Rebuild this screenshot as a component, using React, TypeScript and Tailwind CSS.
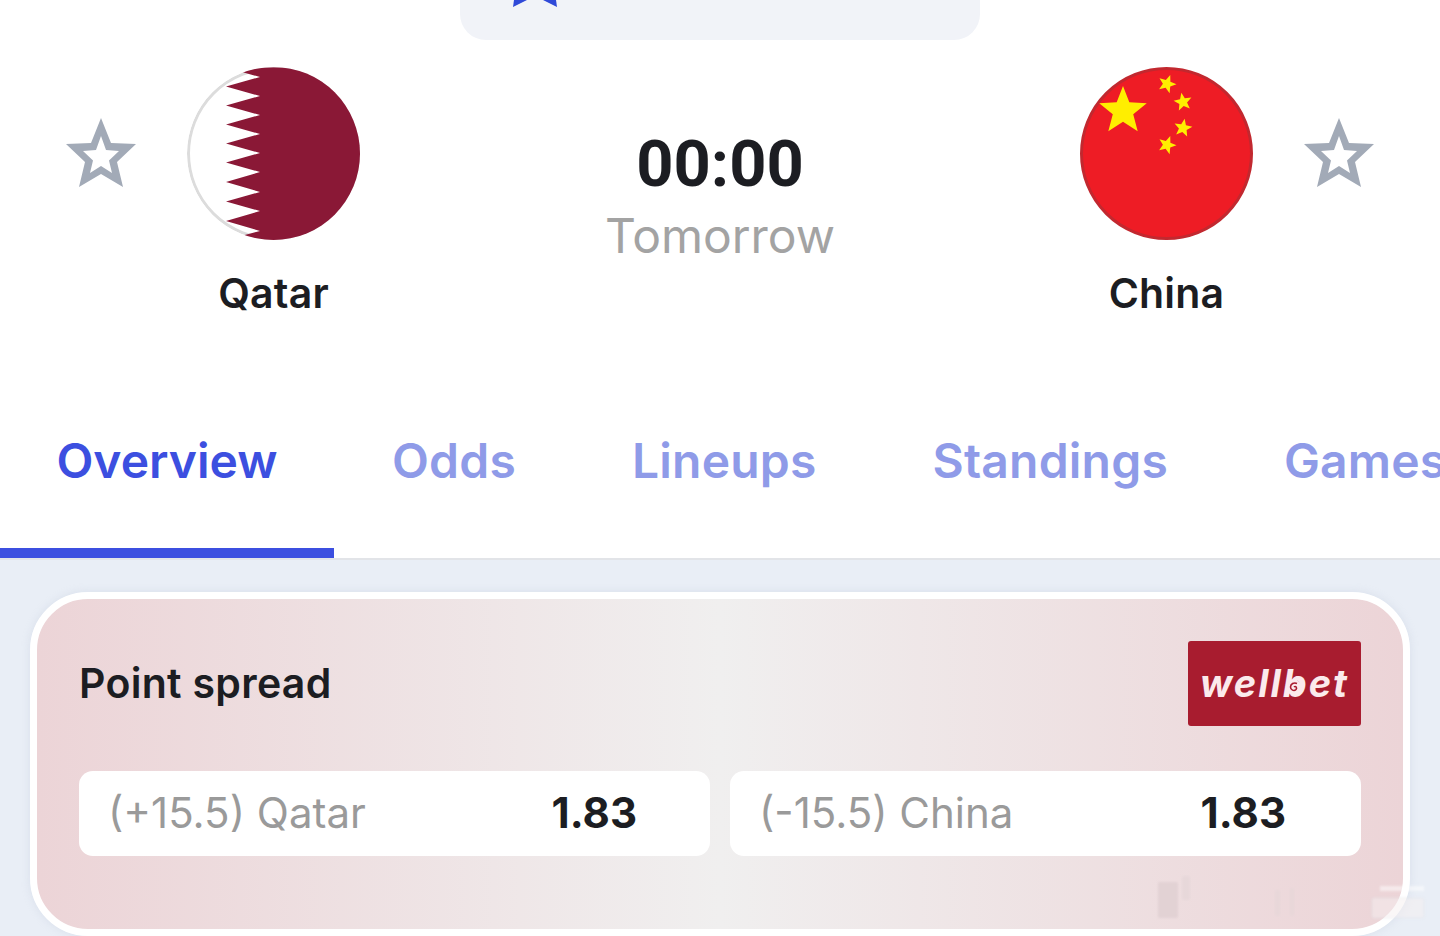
const SANS = "font-['Inter','Liberation_Sans',sans-serif]";

const QATAR_TEETH = [
  "39,0.5", "73,10", "39,19.5", "73,29", "39,38.5", "73,48", "39,57.5", "73,67", "39,76.5",
  "73,86", "39,95.5", "73,105", "39,115", "73,125", "39,134.5", "73,144", "39,154", "73,164", "39,173",
];

function StarOutline() {
  return (
    <svg width="70" height="70" viewBox="0 0 70 70" className="shrink-0">
      <path
        fillRule="evenodd"
        fill="#a2aab7"
        d="M35 0 L45 25 L70 26 L51 44 L57 69 L35 56 L13 69 L19 44 L0 26 L25 25 Z M35 18 L30 32 L17 33 L27 42.5 L24 55 L35 48 L46 55 L43 42.5 L53 33 L40 32 Z"
      />
    </svg>
  );
}

function QatarFlag() {
  return (
    <svg width="173" height="173" viewBox="0 0 173 173">
      <defs>
        <clipPath id="qatar-clip">
          <circle cx="86.5" cy="86.5" r="86.5" />
        </clipPath>
      </defs>
      <g clipPath="url(#qatar-clip)">
        <rect width="173" height="173" fill="#ffffff" />
        <circle cx="86.5" cy="86.5" r="85" fill="none" stroke="#dcdcdc" strokeWidth="3" />
        <polygon points={`${QATAR_TEETH.join(" ")} 173,173 173,0`} fill="#8a1836" />
      </g>
    </svg>
  );
}

function FlagStar({ x, y, r, rotate = 0 }: { x: number; y: number; r: number; rotate?: number }) {
  const pts = Array.from({ length: 10 }, (_, i) => {
    const radius = i % 2 === 0 ? r : r * 0.43;
    const a = (Math.PI / 5) * i - Math.PI / 2;
    return `${(radius * Math.cos(a)).toFixed(2)},${(radius * Math.sin(a)).toFixed(2)}`;
  }).join(" ");
  return <polygon points={pts} fill="#ffee00" transform={`translate(${x} ${y}) rotate(${rotate})`} />;
}

function ChinaFlag() {
  return (
    <svg width="173" height="173" viewBox="0 0 173 173">
      <circle cx="86.5" cy="86.5" r="85" fill="#ee1c25" stroke="#c2282f" strokeWidth="3" />
      <FlagStar x={43} y={44} r={25} />
      <FlagStar x={87} y={17} r={9.5} rotate={20} />
      <FlagStar x={103} y={35} r={9.5} rotate={-10} />
      <FlagStar x={103} y={61} r={9.5} rotate={10} />
      <FlagStar x={87} y={78} r={9.5} rotate={20} />
    </svg>
  );
}

function Team({ name, flag }: { name: string; flag: React.ReactNode }) {
  return (
    <div className="flex w-[173px] flex-col items-center">
      {flag}
      <div className="mt-[31px] text-[41px] leading-[44px] font-semibold tracking-[0.2px] text-[#1c1d22]">{name}</div>
    </div>
  );
}

const TABS = ["Overview", "Odds", "Lineups", "Standings", "Games"];

function Tabs() {
  return (
    <div className="mt-[95px] flex h-[150px] overflow-hidden border-b-2 border-[#e2e4e8] whitespace-nowrap">
      {TABS.map((tab, i) => (
        <div
          key={tab}
          className={
            i === 0
              ? "h-[148px] w-[334px] shrink-0 border-b-[10px] border-[#3c4fe0] pt-[23px] text-center text-[48px] leading-[56px] font-semibold text-[#3c4fe0]"
              : "h-[148px] shrink-0 px-[58px] pt-[23px] text-[48px] leading-[56px] font-semibold tracking-[0.2px] text-[#8f9be8]"
          }
        >
          {tab}
        </div>
      ))}
    </div>
  );
}

function OddButton({ label, odd, right }: { label: string; odd: string; right: string }) {
  return (
    <div className={`flex h-[85px] items-center justify-between rounded-[14px] bg-white pb-[2px] pl-[29px] ${right}`}>
      <span className="text-[42px] text-[#9a9a9a]">{label}</span>
      <span className="text-[42px] font-bold text-[#1c1d22]">{odd}</span>
    </div>
  );
}

function WellbetLogo() {
  return (
    <div className="relative flex h-[85px] w-[173px] items-center justify-center rounded-[3px] bg-[#a81c2f] text-[38px] font-bold tracking-[2px] text-[#fbeaec] italic">
      wellbet
      <svg width="16" height="16" viewBox="0 0 16 16" className="absolute top-[38px] left-[98px]">
        <circle cx="8" cy="8" r="7.5" fill="#fbeaec" />
        <path d="M8 8 C9.5 6.5 11.5 8.5 10 10.5 C8 12.5 4.5 11 4.5 8 C4.5 5 8 3 11 4.5" fill="none" stroke="#a81c2f" strokeWidth="1.6" />
      </svg>
    </div>
  );
}

function Watermark() {
  return (
    <svg width="290" height="60" viewBox="0 0 290 60" className="absolute top-[870px] left-[1140px] opacity-50 blur-[1px]">
      <rect x="18" y="12" width="20" height="36" fill="#d8c8ca" />
      <rect x="42" y="6" width="8" height="24" fill="#e2d4d6" />
      <rect x="135" y="20" width="5" height="26" fill="#e4d6d8" />
      <rect x="150" y="18" width="4" height="28" fill="#e4d6d8" />
      <rect x="240" y="16" width="44" height="5" fill="#ffffff" />
      <rect x="232" y="28" width="52" height="20" rx="2" fill="#f6f0f1" stroke="#dfe1e6" />
    </svg>
  );
}

export default function App() {
  return (
    <div className={`${SANS} relative flex h-[936px] w-[1440px] flex-col overflow-hidden bg-white`}>
      <div className="mx-auto h-10 w-[520px] shrink-0 rounded-b-[26px] bg-[#f1f3f8]">
        <svg width="46" height="7" viewBox="0 0 46 7" className="ml-[53px]">
          <polygon points="0,7 1,0 14,0" fill="#2f49d8" />
          <polygon points="30,0 43,0 44,7" fill="#2f49d8" />
        </svg>
      </div>

      <div className="mt-[27px] flex justify-between px-[66px]">
        <div className="flex items-start gap-[51px]">
          <div className="mt-[51px]">
            <StarOutline />
          </div>
          <Team name="Qatar" flag={<QatarFlag />} />
        </div>
        <div className="flex flex-col items-center pt-[61px]">
          <div className="font-['Roboto',sans-serif] text-[65px] leading-[72px] font-bold text-[#1c1d22]">00:00</div>
          <div className="mt-[8px] text-[48px] leading-[56px] text-[#a3a3a3]">Tomorrow</div>
        </div>
        <div className="flex items-start gap-[51px]">
          <Team name="China" flag={<ChinaFlag />} />
          <div className="mt-[51px]">
            <StarOutline />
          </div>
        </div>
      </div>

      <Tabs />

      <div className="flex-1 bg-[#e9eef6] px-[30px] pt-[32px]">
        <div className="h-[344px] rounded-[58px] border-[7px] border-white bg-gradient-to-r from-[#ecd4d7] via-[#f0efef] to-[#ecd4d7] px-[42px] pt-[42px] shadow-[0_0_8px_rgba(180,190,210,0.3)]">
          <div className="flex items-center justify-between">
            <div className="pt-[1px] text-[41px] font-semibold tracking-[0.3px] text-[#1c1d22]">Point spread</div>
            <WellbetLogo />
          </div>
          <div className="mt-[45px] grid grid-cols-2 gap-[20px]">
            <OddButton label="(+15.5) Qatar" odd="1.83" right="pr-[73px]" />
            <OddButton label="(-15.5) China" odd="1.83" right="pr-[75px]" />
          </div>
        </div>
      </div>

      <Watermark />
    </div>
  );
}
